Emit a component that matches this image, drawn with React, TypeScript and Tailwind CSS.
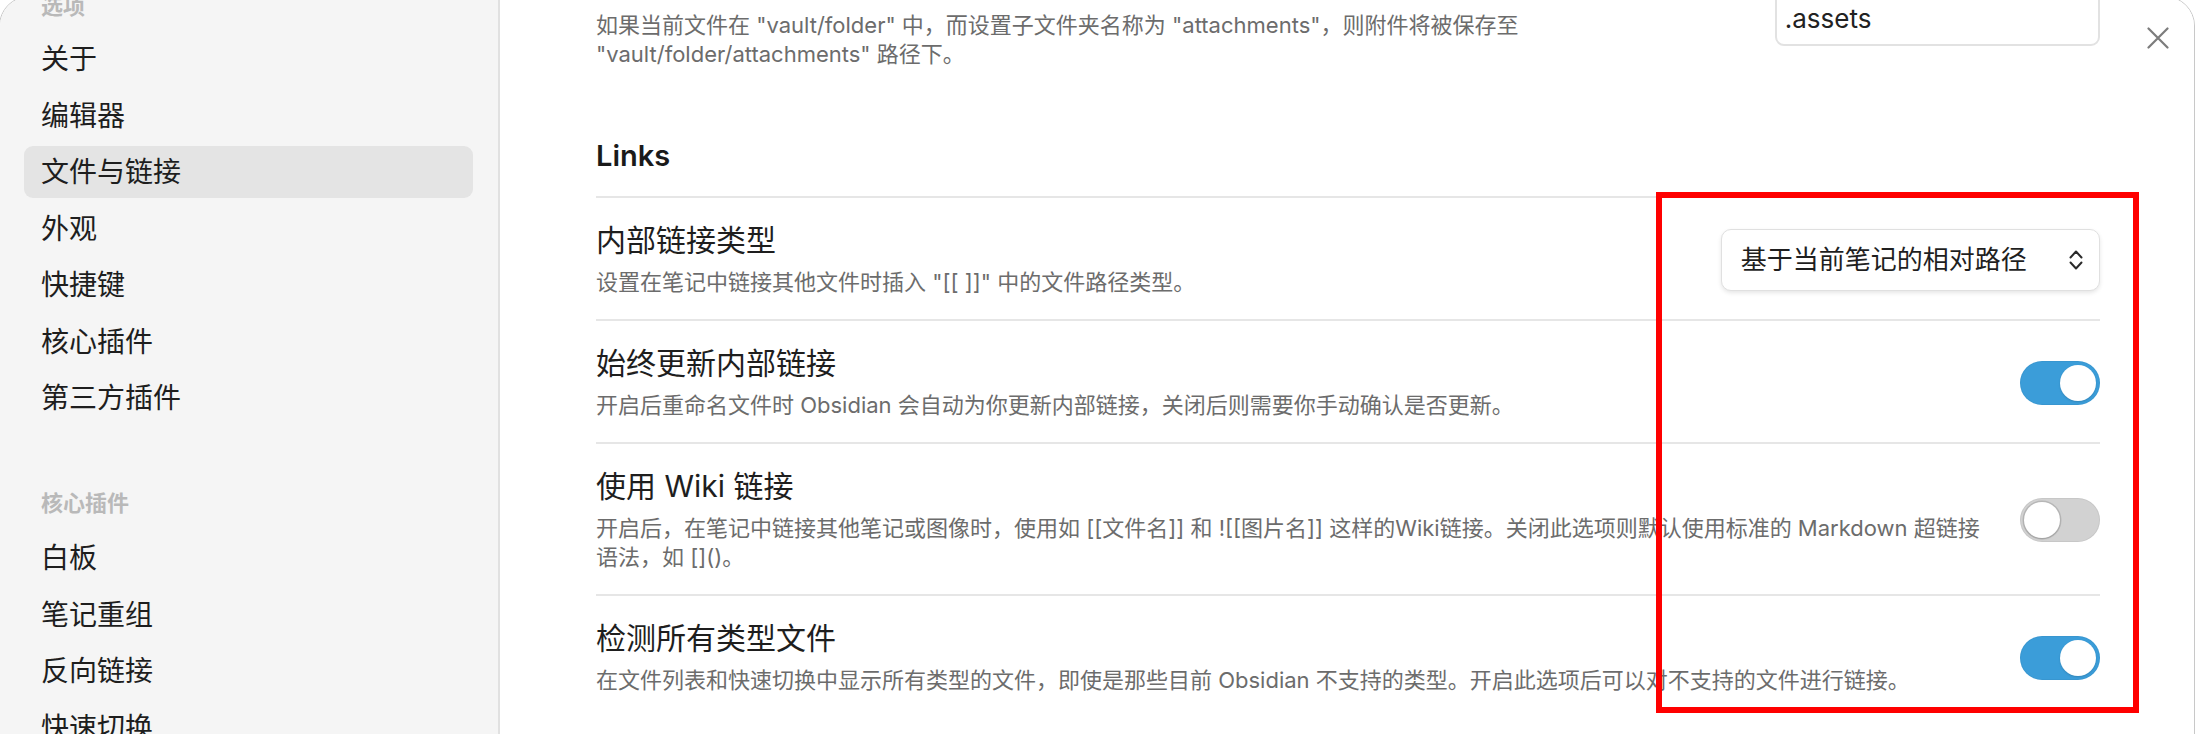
import React from "react";

const CORE = ["关于", "编辑器", "文件与链接", "外观", "快捷键", "核心插件", "第三方插件"];
const PLUGINS = ["白板", "笔记重组", "反向链接", "快速切换"];

const ROWS = [
  {
    name: "内部链接类型",
    desc: ['设置在笔记中链接其他文件时插入 "[[ ]]" 中的文件路径类型。'],
    control: "select",
  },
  {
    name: "始终更新内部链接",
    desc: ["开启后重命名文件时 Obsidian 会自动为你更新内部链接，关闭后则需要你手动确认是否更新。"],
    control: "on",
  },
  {
    name: "使用 Wiki 链接",
    desc: [
      "开启后，在笔记中链接其他笔记或图像时，使用如 [[文件名]] 和 ![[图片名]] 这样的Wiki链接。关闭此选项则默认使用标准的 Markdown 超链接",
      "语法，如 []()。",
    ],
    control: "off",
  },
  {
    name: "检测所有类型文件",
    desc: ["在文件列表和快速切换中显示所有类型的文件，即使是那些目前 Obsidian 不支持的类型。开启此选项后可以对不支持的文件进行链接。"],
    control: "on",
  },
];

function Toggle({ on }: { on: boolean }) {
  return (
    <div
      className={`flex h-[44px] w-[80px] shrink-0 items-center rounded-full p-[4px] ${
        on
          ? "justify-end bg-[#3b9dd9] shadow-[inset_0_0_0_1px_rgba(0,0,0,0.04)]"
          : "justify-start bg-[#d2d2d2] shadow-[inset_0_0_0_1px_rgba(0,0,0,0.05)]"
      }`}
    >
      <div
        className={`h-[36px] w-[36px] rounded-full bg-white ${
          on ? "shadow-[0_1px_2px_rgba(0,0,0,0.15)]" : "shadow-[0_0_0_1.5px_rgba(0,0,0,0.12),0_1px_2px_rgba(0,0,0,0.15)]"
        }`}
      />
    </div>
  );
}

function Select() {
  return (
    <div className="flex h-[62px] w-[379px] shrink-0 items-center justify-between rounded-[10px] border border-[#e0e0e0] bg-white pl-[19px] pr-[16px] shadow-[0_2px_4px_rgba(0,0,0,0.1)]">
      <span className="text-[26px] leading-[32px] text-[#1f1f1f]">基于当前笔记的相对路径</span>
      <svg width="14" height="22" viewBox="0 0 14 22" fill="none" stroke="#2a2a2a" strokeWidth="2" strokeLinecap="round" strokeLinejoin="round">
        <path d="M1.5 8.5 L7 2.5 L12.5 8.5" />
        <path d="M1.5 13.5 L7 19.5 L12.5 13.5" />
      </svg>
    </div>
  );
}

export default function App() {
  return (
    <div className="relative h-[734px] w-[2198px] overflow-hidden bg-white font-['Inter','Noto_Sans_CJK_SC',sans-serif] text-[#1e1e1e]">
      <div className="relative -ml-px -mt-[4px] flex h-[780px] w-[2196px] overflow-hidden rounded-[30px] border border-[#c8c8c8]">
        {/* sidebar */}
        <aside className="w-[500px] shrink-0 border-r-2 border-[#e1e1e1] bg-[#f5f5f5] pl-[24px] pr-[25px]">
          <div className="-mt-[5px] h-[28px] pl-[17px] text-[22px] font-semibold leading-[28px] text-[#b9b9b9]">选项</div>
          <nav className="mt-[13px] flex flex-col gap-[4.5px]">
            {CORE.map((item) => (
              <div
                key={item}
                className={`flex h-[52px] items-center rounded-[9px] pl-[17px] text-[28px] leading-[34px] ${
                  item === "文件与链接" ? "bg-[#e4e4e4]" : ""
                }`}
              >
                {item}
              </div>
            ))}
          </nav>
          <div className="mt-[65px] h-[28px] pl-[17px] text-[22px] font-semibold leading-[28px] text-[#b9b9b9]">核心插件</div>
          <nav className="mt-[15px] flex flex-col gap-[4.5px]">
            {PLUGINS.map((item) => (
              <div key={item} className="flex h-[52px] items-center rounded-[9px] pl-[17px] text-[28px] leading-[34px]">
                {item}
              </div>
            ))}
          </nav>
        </aside>

        {/* settings */}
        <main className="flex-1 bg-white pl-[96px] pr-[95px]">
          <div className="-mt-[32.5px] flex items-center gap-[40px] pb-[22px]">
            <div className="flex-1">
              <div className="text-[30px] leading-[36px]">子文件夹名称</div>
              <div className="mt-[10px] text-[22px] leading-[29px] text-[#6c6c6c]">
                如果当前文件在 "vault/folder" 中，而设置子文件夹名称为 "attachments"，则附件将被保存至
                <br />
                "vault/folder/attachments" 路径下。
              </div>
            </div>
            <div className="flex h-[58px] w-[325px] shrink-0 items-center rounded-[9px] border-2 border-[#e2e2e2] bg-white pl-[8px] pt-[3px] text-[26px] text-[#222]">
              .assets
            </div>
          </div>

          <div className="pb-[22px] pt-[47.5px] text-[29px] font-semibold leading-[36px] text-[#1a1a1a]">Links</div>

          {ROWS.map((row) => (
            <div key={row.name} className="flex items-center gap-[40px] border-t-2 border-[#e6e6e6] pb-[22px] pt-[24px]">
              <div className="min-w-0 flex-1">
                <div className="text-[30px] leading-[36px]">{row.name}</div>
                <div className="mt-[10px] whitespace-nowrap text-[22px] leading-[29px] text-[#6c6c6c]">
                  {row.desc.map((line, i) => (
                    <div key={i}>{line}</div>
                  ))}
                </div>
              </div>
              {row.control === "select" ? <Select /> : <Toggle on={row.control === "on"} />}
            </div>
          ))}
        </main>

        {/* close button */}
        <div className="absolute left-[2147px] top-[30px]">
          <svg width="22" height="22" viewBox="0 0 22 22" stroke="#7c7c7c" strokeWidth="2.2" strokeLinecap="round">
            <path d="M1.5 1.5 L20.5 20.5 M20.5 1.5 L1.5 20.5" />
          </svg>
        </div>
      </div>

      {/* annotation */}
      <div className="pointer-events-none absolute left-[1656px] top-[192px] h-[521px] w-[483px] border-[6px] border-[#ff0000]" />
    </div>
  );
}
